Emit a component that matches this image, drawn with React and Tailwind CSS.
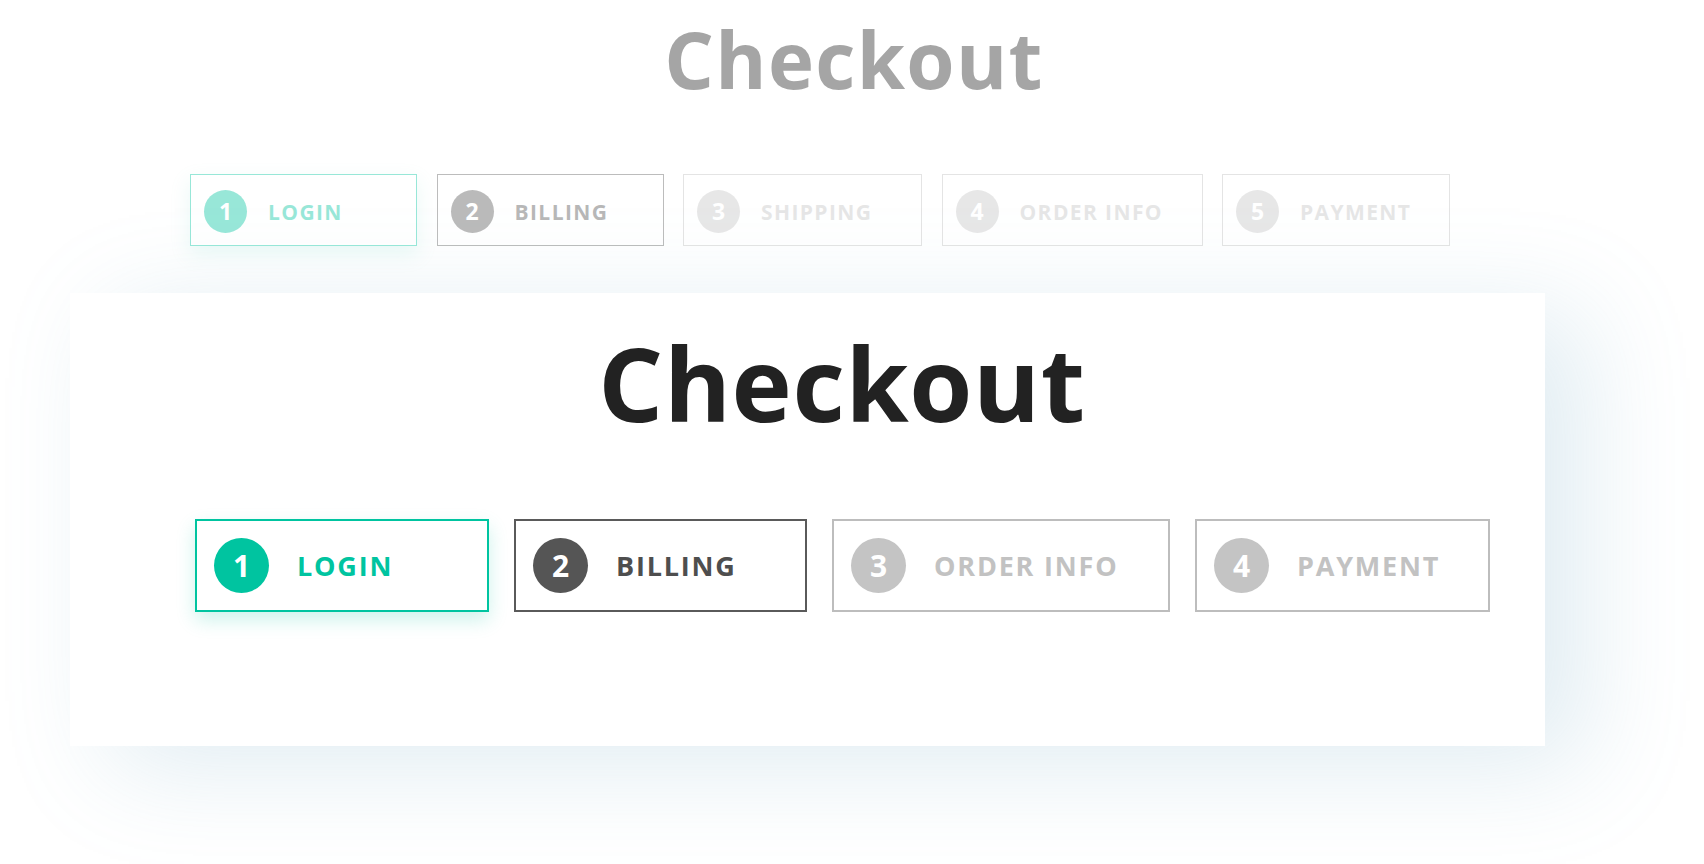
import React from "react";

const topSteps = [
  { n: 1, label: "LOGIN", v: "active", w: "w-[227px]" },
  { n: 2, label: "BILLING", v: "dark", w: "w-[227px]" },
  { n: 3, label: "SHIPPING", v: "light", w: "w-[239px]" },
  { n: 4, label: "ORDER INFO", v: "light", w: "w-[261px]" },
  { n: 5, label: "PAYMENT", v: "light", w: "w-[228px]" },
];

const mainSteps = [
  { n: 1, label: "LOGIN", v: "active", w: "w-[294px]" },
  { n: 2, label: "BILLING", v: "dark", w: "w-[293px]" },
  { n: 3, label: "ORDER INFO", v: "light", w: "w-[338px]" },
  { n: 4, label: "PAYMENT", v: "light", w: "w-[295px]" },
];

const box = {
  active: "border-[#00c4a0] shadow-[0_8px_18px_rgba(0,196,160,0.2)]",
  dark: "border-[#5a5a5a]",
  light: "border-[#bdbdbd]",
};
const circle = {
  active: "bg-[#00c4a0]",
  dark: "bg-[#555555]",
  light: "bg-[#c4c4c4]",
};
const text = {
  active: "text-[#00c4a0]",
  dark: "text-[#4e4e4e]",
  light: "text-[#c2c2c2]",
};

function MainStep({ s }) {
  return (
    <div
      className={`${s.w} h-[93px] border-2 bg-white flex items-center pl-[17px] gap-[28px] shrink-0 ${box[s.v]}`}
    >
      <div
        className={`size-[55px] rounded-full flex items-center justify-center text-white text-[30px] font-bold leading-none ${circle[s.v]}`}
      >
        {s.n}
      </div>
      <span className={`text-[27px] font-bold leading-none tracking-[1.8px] ${text[s.v]}`}>
        {s.label}
      </span>
    </div>
  );
}

function TopStep({ s }) {
  return (
    <div
      className={`${s.w} h-[72px] border-[1.5px] bg-white flex items-center pl-[13px] pt-[3px] gap-[21px] shrink-0 ${box[s.v]}`}
    >
      <div
        className={`size-[43px] rounded-full flex items-center justify-center text-white text-[23px] font-bold leading-none ${circle[s.v]}`}
      >
        {s.n}
      </div>
      <span className={`text-[21px] font-bold leading-none tracking-[1.4px] pt-[2px] ${text[s.v]}`}>
        {s.label}
      </span>
    </div>
  );
}

export default function App() {
  return (
    <div className="w-[1704px] h-[864px] bg-white overflow-hidden font-['Open_Sans',sans-serif] flex flex-col">
      <div className="opacity-40 flex flex-col">
        <h1 className="pt-[20px] pl-[4px] text-center text-[78px] font-bold leading-none tracking-[1.3px] text-[#202020]">
          Checkout
        </h1>
        <div className="mt-[76px] pl-[190px] flex gap-[19.5px]">
          {topSteps.map((s) => (
            <TopStep key={s.n} s={s} />
          ))}
        </div>
      </div>

      <div className="mt-[47px] ml-[70px] w-[1475px] h-[453px] bg-white shadow-[40px_20px_100px_rgba(100,160,190,0.2)] pt-[39px] pl-[125px] pr-[56px] flex flex-col">
        <h1 className="text-center text-[102px] font-bold leading-none tracking-[0.6px] text-[#222222]">
          Checkout
        </h1>
        <div className="mt-[85px] flex gap-[25px]">
          {mainSteps.map((s) => (
            <MainStep key={s.n} s={s} />
          ))}
        </div>
      </div>
    </div>
  );
}
